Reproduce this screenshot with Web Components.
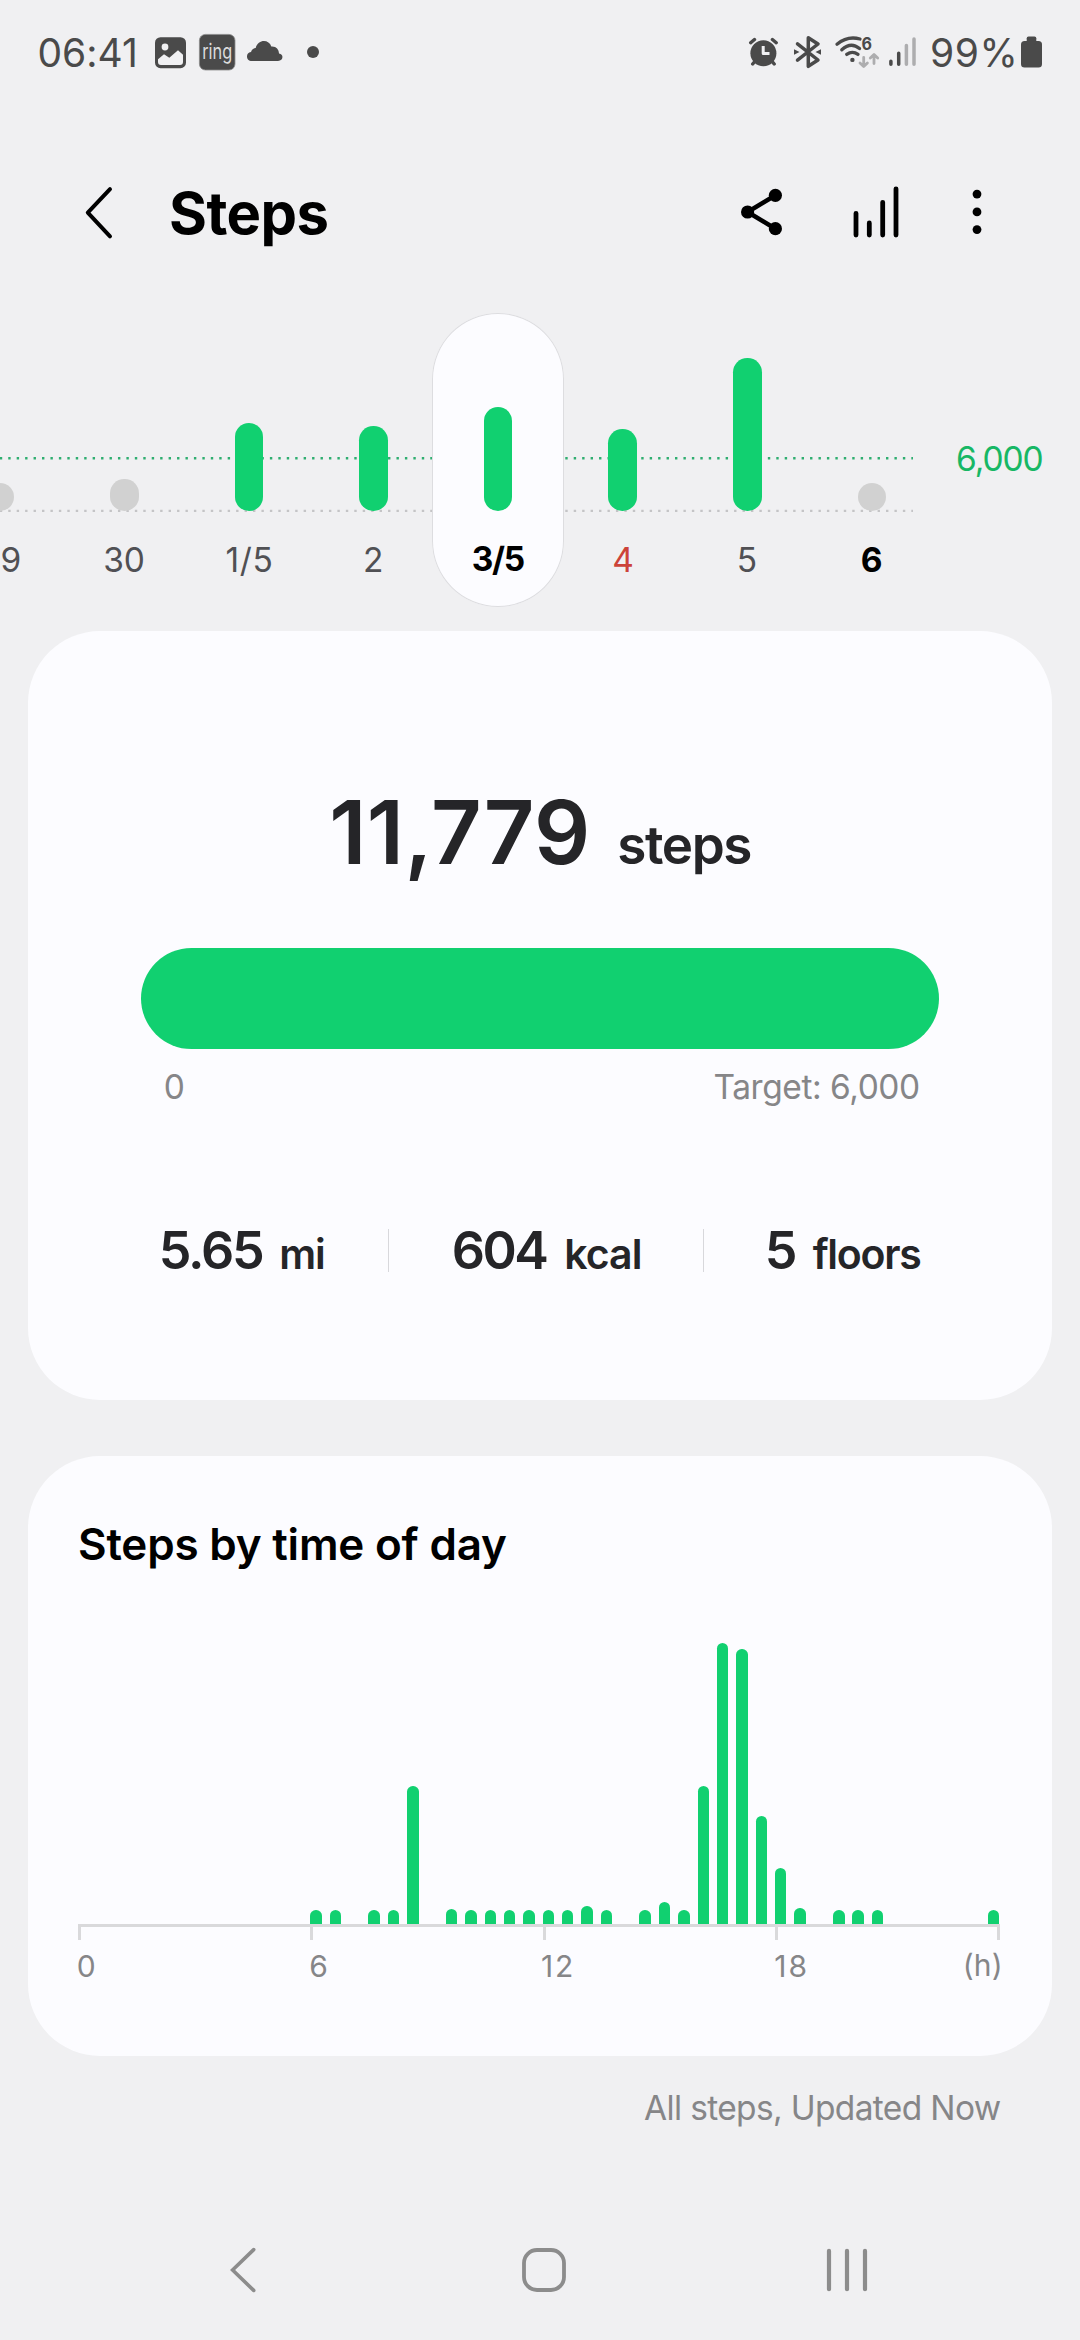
<!DOCTYPE html>
<html lang="en">
<head>
<meta charset="utf-8">
<title>Steps</title>
<style>
html,body{margin:0;padding:0}
body{width:1080px;height:2340px;overflow:hidden;background:#f0f0f2;font-family:Inter,"Liberation Sans",sans-serif;color:#252528}
</style>
</head>
<body>
<steps-app></steps-app>
<script>
const GREEN = '#11d070';

/* Text set to an exact ink width: tracking absorbs the difference. */
const pen = document.createElement('canvas').getContext('2d');
class InkText extends HTMLElement {
  connectedCallback() {
    const s = +this.getAttribute('size'), w = +this.getAttribute('w');
    const weight = this.getAttribute('weight') || 400;
    const text = this.textContent;
    pen.font = `${weight} ${s}px Inter, "Liberation Sans", sans-serif`;
    const m = pen.measureText(text);
    const ink = m.actualBoundingBoxLeft + m.actualBoundingBoxRight;
    const n = text.length - 1;
    const track = n ? (w - ink) / n : 0;
    const indent = m.actualBoundingBoxLeft + (n ? 0 : (w - ink) / 2);
    const root = this.shadowRoot || this.attachShadow({mode: 'open'});
    root.innerHTML = `<style>:host{display:block;flex:none;width:${w}px;height:${s}px;line-height:${s}px;
      font-size:${s}px;font-weight:${weight};letter-spacing:${track}px;text-indent:${indent}px;white-space:nowrap}</style><slot></slot>`;
  }
}
customElements.define('ink-text', InkText);

const ICONS = {
  image: [31, 40, `<rect y="5.2" width="31" height="31" rx="5.5" fill="#4a4a4a"/><circle cx="10" cy="15" r="3.4" fill="#f0f0f2"/><path d="M3 27.3L9 22.3L14.3 25.7L23 18.3L28 22.7V30q0 3-3 3H6q-3 0-3-3z" fill="#f0f0f2"/>`],
  ring: [36.4, 40, `<rect x=".4" y="2.4" width="35.6" height="35.6" rx="6" fill="#4a4a4a" stroke="#8a8a8a" stroke-width=".8"/><text x="3.2" y="27" font-size="21" textLength="30" lengthAdjust="spacingAndGlyphs" fill="#dcdcdc">ring</text>`],
  cloud: [35.6, 40, `<path d="M5 29C-1.5 29-1.5 20.5 4 20C5 17 7 16 8.7 16C11 7 22 7 24.3 14.5C29 14 32 17.5 32 21.5C37 22 36.5 29 31 29Z" fill="#4a4a4a"/>`],
  dot: [12, 40, `<circle cx="6" cy="20" r="6" fill="#4a4a4a"/>`],
  alarm: [29, 40, `<circle cx="14.4" cy="21.3" r="13" fill="#4a4a4a"/><g fill="none" stroke="#4a4a4a" stroke-width="3.4" stroke-linecap="round"><path d="M1.7 10.7L5.5 7.5M27.2 10.7L23.4 7.5M3.7 32L7 28M25.2 32L22 28"/></g><path d="M14.2 14V21.5H20.5" fill="none" stroke="#f0f0f2" stroke-width="3" stroke-linejoin="round"/>`],
  bluetooth: [27, 40, `<path d="M3.5 11.8L24 28L14.3 34.3V5.7L24 12L3.5 28.2" fill="none" stroke="#4a4a4a" stroke-width="3.5" stroke-linejoin="round" stroke-linecap="round"/><path d="M0 17.2L5.5 20L0 22.8ZM27 17.2L21.5 20L27 22.8Z" fill="#4a4a4a"/>`],
  wifi: [44, 40, `<g fill="none" stroke="#4a4a4a" stroke-width="3.3" stroke-linecap="round"><path d="M2 12.2Q12.5 3.5 25 7"/><path d="M6.8 17.8Q16 9.4 24.5 16.6"/><path d="M11.7 22.4Q17.4 18.4 23 22.4"/></g><circle cx="17.4" cy="27.9" r="2.2" fill="#4a4a4a"/><text x="26.6" y="18" font-size="18" font-weight="700" fill="#4a4a4a" stroke="#f0f0f2" stroke-width="1.6" paint-order="stroke" textLength="10.5" lengthAdjust="spacingAndGlyphs">6</text><g fill="none" stroke="#adadaf" stroke-width="2.8" stroke-linecap="round" stroke-linejoin="round"><path d="M28.7 25.5V34.3M25 31L28.7 34.6L32.4 31M39 31.5V22.7M35.3 26L39 22.4L42.7 26"/></g>`],
  signal: [27, 40, `<g stroke-width="3.5" stroke-linecap="round"><path d="M1.9 29.2V32.3M9.7 21.3V32.3" stroke="#4a4a4a"/><path d="M17.4 13.5V32.3M25 7V32.3" stroke="#adadaf"/></g>`],
  battery: [21, 40, `<rect y="9" width="21" height="26.5" rx="3.5" fill="#4a4a4a"/><rect x="5.7" y="4.4" width="9.6" height="8" rx="1.8" fill="#4a4a4a"/>`],
  back: [28, 54, `<path d="M25 3.2L2.8 26.6L25 50.4" fill="none" stroke="#000" stroke-width="4" stroke-linecap="round" stroke-linejoin="round"/>`],
  share: [42, 60, `<path d="M34.4 13.3L6.6 30L34.4 46.7" fill="none" stroke="#000" stroke-width="4.6"/><circle cx="6.6" cy="30" r="6.6"/><circle cx="34.4" cy="13.3" r="6.6"/><circle cx="34.4" cy="46.7" r="6.6"/>`],
  chart: [46, 60, `<path d="M3 31.3V53M16.3 41V53M29.7 20.3V53M43 6.8V53" stroke="#000" stroke-width="4.8" stroke-linecap="round"/>`],
  more: [10, 60, `<circle cx="5" cy="12.1" r="4.4"/><circle cx="5" cy="29.9" r="4.4"/><circle cx="5" cy="47.6" r="4.4"/>`],
  navback: [26, 46, `<path d="M23.7 2.6L2.6 23L23.7 43.4" fill="none" stroke="#8c8c8c" stroke-width="3.6" stroke-linecap="round" stroke-linejoin="miter"/>`],
  navhome: [44, 46, `<rect x="2" y="3" width="40" height="40" rx="13" fill="none" stroke="#8c8c8c" stroke-width="3.8"/>`],
  navrecents: [40, 46, `<path d="M2 3.8V42.2M20 3.8V42.2M38 3.8V42.2" stroke="#8c8c8c" stroke-width="4.2" stroke-linecap="round"/>`]
};
class UiIcon extends HTMLElement {
  connectedCallback() {
    const [w, h, body] = ICONS[this.getAttribute('name')];
    this.attachShadow({mode: 'open'}).innerHTML =
      `<style>:host{display:block;flex:none;width:${w}px;height:${h}px}svg{display:block;overflow:visible}</style>
       <svg width="${w}" height="${h}" viewBox="0 0 ${w} ${h}" font-family="Inter,sans-serif">${body}</svg>`;
  }
}
customElements.define('ui-icon', UiIcon);

function define(name, html) {
  const t = document.createElement('template');
  t.innerHTML = html;
  customElements.define(name, class extends HTMLElement {
    constructor() {
      super();
      this.attachShadow({mode: 'open'}).append(t.content.cloneNode(true));
    }
  });
}

define('status-bar', `<style>
:host{display:flex;height:104px;box-sizing:border-box;padding:0 38px 0 39.5px;justify-content:space-between;align-items:center;color:#4a4a4a}
div{display:flex;align-items:center}
</style>
<div>
<ink-text size="39" w="95.5">06:41</ink-text>
<ui-icon name="image" style="margin-left:20px"></ui-icon>
<ui-icon name="ring" style="margin-left:13.3px"></ui-icon>
<ui-icon name="cloud" style="margin-left:11px"></ui-icon>
<ui-icon name="dot" style="margin-left:24.7px"></ui-icon>
</div>
<div>
<ui-icon name="alarm"></ui-icon>
<ui-icon name="bluetooth" style="margin-left:15.7px"></ui-icon>
<ui-icon name="wifi" style="margin-left:14.6px"></ui-icon>
<ui-icon name="signal" style="margin-left:9.7px"></ui-icon>
<ink-text size="39" w="81.5" style="margin-left:16px">99%</ink-text>
<ui-icon name="battery" style="margin-left:7.5px"></ui-icon>
</div>`);

define('app-header', `<style>
:host{display:flex;height:209px;box-sizing:border-box;padding:9px 98.5px 0 85px;align-items:center;color:#000}
.title{margin-left:58px}
.actions{display:flex;margin:-2px 0 0 auto}
</style>
<ui-icon name="back"></ui-icon>
<ink-text class="title" size="58" weight="700" w="156.5">Steps</ink-text>
<div class="actions"><ui-icon name="share"></ui-icon><ui-icon name="chart" style="margin-left:69.8px"></ui-icon><ui-icon name="more" style="margin-left:72.8px"></ui-icon></div>`);

const DAYS = [
  {l: '29', w: 39, h: 28.3, c: 'low'}, {l: '30', w: 38.6, h: 32, c: 'low'},
  {l: '1/5', w: 45, h: 87.7}, {l: '2', w: 17, h: 85.3},
  {l: '3/5', w: 51, h: 104, c: 'sel'}, {l: '4', w: 19, h: 82, c: 'sun'},
  {l: '5', w: 17, h: 153}, {l: '6', w: 19, h: 28.3, c: 'low today'}
];
class WeekStrip extends HTMLElement {
  connectedCallback() {
    const dots = (y, c) => `<line x1="-.2" x2="913" y1="${y}" y2="${y}" stroke="${c}" stroke-width="2.4" stroke-dasharray="2.4 6.04"/>`;
    this.attachShadow({mode: 'open'}).innerHTML = `<style>
:host{display:flex;position:relative;height:294px;width:1080px;overflow:hidden}
svg{position:absolute;left:0;top:0}
.days{display:flex;flex:none;margin-left:-62.3px;position:relative}
.day{box-sizing:border-box;width:124.56px;height:294px;display:flex;flex-direction:column;align-items:center;color:#505054}
.track{flex:none;height:198px;display:flex;align-items:flex-end}
.track i{display:block;width:28.5px;border-radius:14.25px;background:${GREEN}}
.label{flex:none;box-sizing:border-box;height:96px;padding-top:2.5px;display:flex;align-items:center}
.low i{background:#d1d1d1}
.sel{width:132px;margin:0 -3.72px;background:#fcfcff;border-radius:66px;box-shadow:inset 0 0 0 1px #dddde0;color:#000}
.sel .label{padding-top:1px}
.sun{color:#cc4339}.today{color:#000}
.goal{margin:129.5px 0 0 23px;color:#17b765}
</style>
<svg width="1080" height="294">${dots(145.3, '#2fae70')}${dots(197.9, '#c4c4c6')}</svg>
<div class="days">${DAYS.map(d => `<div class="day ${d.c || ''}"><div class="track"><i style="height:${d.h}px"></i></div><div class="label"><ink-text size="33.5" w="${d.w}" weight="${/sel|today/.test(d.c) ? 700 : 400}">${d.l}</ink-text></div></div>`).join('')}</div>
<ink-text class="goal" size="33.5" w="85.4">6,000</ink-text>`;
  }
}
customElements.define('week-strip', WeekStrip);

define('surface-card', `<style>:host{display:flex;flex-direction:column;box-sizing:border-box;margin:0 28px;border-radius:72px;background:#fcfcff}</style><slot></slot>`);

define('day-summary', `<style>
:host{display:block}
.total{display:flex;align-items:baseline;height:88px;margin:157px 0 0 305.2px}
.bar{height:101px;border-radius:50.5px;background:${GREEN};margin:72px 113px 0}
.scale{display:flex;justify-content:space-between;margin:22px 133px 0 137.5px;color:#868688}
.stats{display:flex;align-items:center;height:54px;margin:119.2px 0 0 133.8px}
.stat{display:flex;align-items:baseline}
.stats hr{flex:none;border:0;width:1px;height:43px;margin:0;background:#d8d8dc}
</style>
<div class="total"><ink-text size="88" weight="600" w="252.8">11,779</ink-text><ink-text size="53" weight="600" w="131.2" style="margin-left:33.2px">steps</ink-text></div>
<div class="bar"></div>
<div class="scale"><ink-text size="33.5" w="17.7">0</ink-text><ink-text size="33.5" w="204.5">Target: 6,000</ink-text></div>
<div class="stats">
<div class="stat"><ink-text size="52" weight="600" w="101.2">5.65</ink-text><ink-text size="41" weight="600" w="42.8" style="margin-left:18.2px">mi</ink-text></div>
<hr style="margin-left:64px">
<div class="stat" style="margin-left:64.7px"><ink-text size="52" weight="600" w="93.7">604</ink-text><ink-text size="41" weight="600" w="73.5" style="margin-left:18.8px">kcal</ink-text></div>
<hr style="margin-left:63.5px">
<div class="stat" style="margin-left:64.3px"><ink-text size="52" weight="600" w="26.5">5</ink-text><ink-text size="41" weight="600" w="107.7" style="margin-left:17.7px">floors</ink-text></div>
</div>`);

/* Half-hour slots since midnight: bar height in pixels */
const SLOTS = {12:14.3,13:14.3,15:14.3,16:14.3,17:138.3,19:15.2,20:14.3,21:14.3,22:14.3,23:14.3,24:14.3,25:14.3,26:18,27:14.3,29:14.3,30:22,31:14.3,32:138.5,33:281.4,34:275.4,35:108.3,36:56.5,37:16.4,39:14.3,40:14.3,41:14.3,47:14.3};
class DayChart extends HTMLElement {
  connectedCallback() {
    this.attachShadow({mode: 'open'}).innerHTML = `<style>
:host{display:block;width:921.7px;margin:0 0 0 50px}
.plot{display:flex;justify-content:space-between;align-items:flex-end;height:358.5px}
.plot i{display:block;width:11.5px;border-radius:5.75px 5.75px 0 0;background:${GREEN}}
.axis{height:13px;border-top:3px solid #d9d9db;display:flex}
.axis b{display:block;flex:none;width:3px;height:13px;background:#d9d9db}
.labels{display:flex;align-items:center;height:30px;margin-top:11px;color:#868688}
</style>
<div class="plot">${Array.from({length: 48}, (_, i) => `<i style="height:${SLOTS[i] || 0}px"></i>`).join('')}</div>
<div class="axis"><b></b><b style="margin-left:229.4px"></b><b style="margin-left:229.2px"></b><b style="margin-left:229.5px"></b><b style="margin-left:auto"></b></div>
<div class="labels"><ink-text size="30" w="16.4">0</ink-text><ink-text size="30" w="16.8" style="margin-left:215.4px">6</ink-text><ink-text size="30" w="30" style="margin-left:215.4px">12</ink-text><ink-text size="30" w="30.3" style="margin-left:203.2px">18</ink-text><ink-text size="30" w="34" style="margin:-2px 0 0 auto">(h)</ink-text></div>`;
  }
}
customElements.define('day-chart', DayChart);

define('nav-bar', `<style>:host{display:flex;align-items:center;box-sizing:border-box;height:179px;padding:39px 213px 0 229.5px}</style>
<ui-icon name="navback"></ui-icon><ui-icon name="navhome" style="margin-left:266.5px"></ui-icon><ui-icon name="navrecents" style="margin-left:261px"></ui-icon>`);

define('steps-app', `<style>
:host{display:flex;flex-direction:column;width:1080px;height:2340px}
.summary{margin-top:24px;height:769px}
.times{margin-top:56px;height:600px}
.heading{margin:65.5px 0 0 52px;color:#000}
.foot{display:flex;justify-content:flex-end;align-items:center;height:105px;padding-right:79.3px;color:#868688}
</style>
<status-bar></status-bar>
<app-header></app-header>
<week-strip></week-strip>
<surface-card class="summary"><day-summary></day-summary></surface-card>
<surface-card class="times"><ink-text class="heading" size="44" weight="600" w="427">Steps by time of day</ink-text><day-chart></day-chart></surface-card>
<div class="foot"><ink-text size="33.5" w="356.7">All steps, Updated Now</ink-text></div>
<nav-bar></nav-bar>`);
</script>
</body>
</html>
